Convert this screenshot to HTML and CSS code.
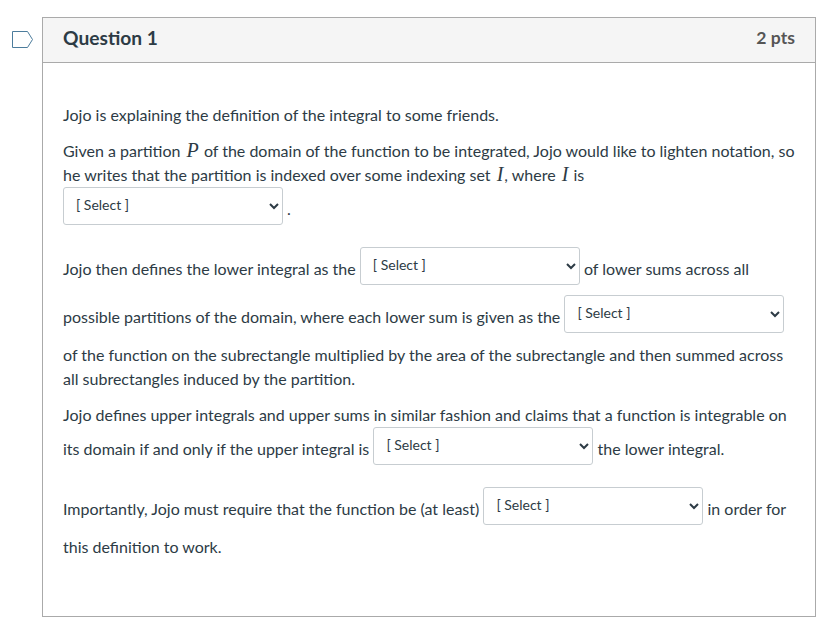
FILE: index.html
```html
<!DOCTYPE html>
<html lang="en">
<head>
    <meta charset="UTF-8">
    <meta name="viewport" content="width=device-width, initial-scale=1.0">
    <title>Question 1</title>
    <link rel="stylesheet" href="styles.css">
</head>
<body>

    <div class="question-row">
        <!-- flag -->
        <div class="flag">
            <svg width="22" height="18" viewBox="0 0 22 18">
                <path d="M0.5 0.5H15.5L20.5 8.5L15.5 16.5H0.5Z" fill="#fff" stroke="#4c7c9c" stroke-width="1"/>
            </svg>
        </div>

        <div class="question">
            <div class="question-header">
                <span class="question-name">Question 1</span>
                <span class="question-points">2 pts</span>
            </div>

            <div class="question-text">
                <p>Jojo is explaining the definition of the integral to some friends.</p>
                <p>Given a partition <i class="math">P</i> of the domain of the function to be integrated, Jojo would like to lighten notation, so he writes that the partition is indexed over some indexing set <i class="math">I</i>, where <i class="math">I</i> is<br>
                    <select class="answer"><option>[ Select ]</option></select> .</p>
                <p>Jojo then defines the lower integral as the <select class="answer"><option>[ Select ]</option></select> of lower sums across all possible partitions of the domain, where each lower sum is given as the <select class="answer"><option>[ Select ]</option></select> of the function on the subrectangle multiplied by the area of the subrectangle and then summed across all subrectangles induced by the partition.</p>
                <p>Jojo defines upper integrals and upper sums in similar fashion and claims that a function is integrable on its domain if and only if the upper integral is <select class="answer"><option>[ Select ]</option></select> the lower integral.</p>
                <p>Importantly, Jojo must require that the function be (at least) <select class="answer"><option>[ Select ]</option></select> in order for this definition to work.</p>
            </div>
        </div>
    </div>

</body>
</html>
```

FILE: styles.css
```css
body {
    margin: 0;
    font-family: "Lato", "Open Sans", sans-serif;
    font-size: 16px;
    line-height: 24px;
    color: #2d3b45;
    background-color: #fff;
}

.question-row {
    display: flex;
    padding: 17px 22px 0 12px;
}

/* flag */
.flag {
    width: 30px;
    padding-top: 14px;
    line-height: 0;
}

.question {
    width: 774px;
    height: 600px;
    box-sizing: border-box;
    border: 1px solid #aaa;
}

.question-header {
    display: flex;
    justify-content: space-between;
    align-items: center;
    height: 44px;
    padding: 0 20px 4px;
    box-sizing: content-box;
    height: 40px;
    background-color: #f5f5f5;
    border-bottom: 1px solid #aaa;
}
.question-name {
    font-size: 19.2px;
    font-weight: bold;
}
.question-points {
    font-size: 17.6px;
    font-weight: bold;
    color: #555;
}

.question-text {
    padding: 40px 20px 0;
}
.question-text p {
    margin: 0 0 12px;
}

.math {
    padding: 0 1px 0 2px;
    font-family: "Liberation Serif", serif;
    font-size: 20px;
    line-height: 0;
}

/* dropdown */
.answer {
    width: 220px;
    height: 38px;
    margin-bottom: 10px;
    padding: 4px 8px 8px;
    vertical-align: middle;
    font-family: "Lato", sans-serif;
    font-size: 14px;
    color: #2d3b45;
    background-color: #fff;
    border: 1px solid #c7cdd1;
    border-radius: 3px;
}
```
